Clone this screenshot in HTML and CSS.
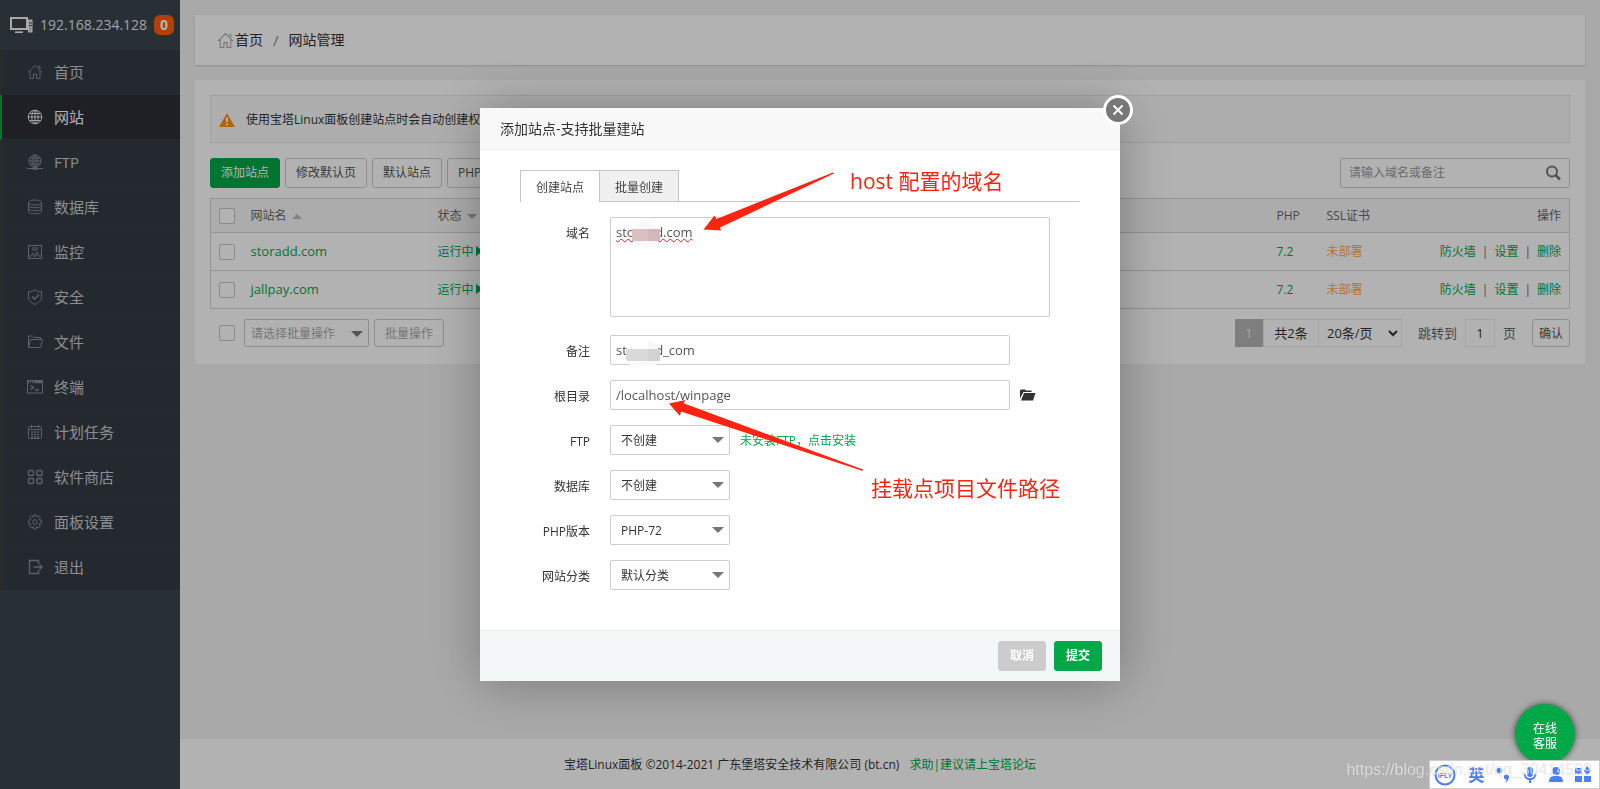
FILE: index.html
```html
<!DOCTYPE html>
<html lang="zh-CN">
<head>
<meta charset="utf-8">
<title>宝塔Linux面板</title>
<link rel="stylesheet" href="styles.css">
</head>
<body>
<div class="app">
  <aside class="sidebar">
    <div class="server">
      <svg width="24" height="18" viewBox="0 0 24 18" fill="none" stroke="#f2f2f2" stroke-width="2"><rect x="1" y="2" width="16" height="11"/><path d="M5 16.200h8" stroke-width="1.600"/><rect x="18.500" y="4" width="3.500" height="12" fill="#ccc" stroke-width="1"/><path d="M19 7h3M19 9.500h3" stroke="#555" stroke-width="1"/></svg>
      <span>192.168.234.128</span><span class="badge">0</span>
    </div>
    <nav class="menu">
      <a href="#"><svg class="ico" viewBox="0 0 16 16"><path d="M1 8.500 8 1.500l7 7M3 7v7.500h3.500V10h3v4.500H13V7M11 2.500h2v2.500"/></svg>首页</a>
      <a href="#" class="active"><svg class="ico" viewBox="0 0 16 16"><circle cx="8" cy="8" r="6.800"/><ellipse cx="8" cy="8" rx="3.200" ry="6.800"/><path d="M8 1v14M1 8h14M2 4.500h12M2 11.500h12"/></svg>网站</a>
      <a href="#"><svg class="ico" viewBox="0 0 16 16"><circle cx="8" cy="7" r="6"/><ellipse cx="8" cy="7" rx="2.800" ry="6"/><path d="M8 1v13M2 7h12M3 4h10M3 10h10M0 14.500h16"/><path d="M5.500 14.500h5" stroke-width="2.500"/></svg>FTP</a>
      <a href="#"><svg class="ico" viewBox="0 0 16 16"><ellipse cx="8" cy="3.500" rx="6.500" ry="2.500"/><path d="M1.500 3.500v9c0 3 13 3 13 0v-9M1.500 6.500c0 3 13 3 13 0M1.500 9.500c0 3 13 3 13 0"/></svg>数据库</a>
      <a href="#"><svg class="ico" viewBox="0 0 16 16"><rect x="1.500" y="1.500" width="13" height="13"/><path d="M5 4h6M5 6h6M2 12h2.500l1.500-3 2 4 2-5 1.500 4H14"/></svg>监控</a>
      <a href="#"><svg class="ico" viewBox="0 0 16 16"><path d="M8 .8c2 1.500 4 1.900 6.500 1.900v5c0 4-3 6.200-6.500 7.700-3.500-1.500-6.500-3.700-6.500-7.700v-5C4 2.700 6 2.300 8 .8z"/><path d="m5 7.500 2.500 2.500L12 5.500" stroke-width="1.500"/></svg>安全</a>
      <a href="#"><svg class="ico" viewBox="0 0 16 16"><path d="M1.500 13V2h4l1.500 1.500h6.500v2M1.500 13.500 3.500 5.500h12l-2 8z"/></svg>文件</a>
      <a href="#"><svg class="ico" viewBox="0 0 16 16"><rect x=".5" y="1.500" width="15" height="12.500"/><path d="M1 3h14" stroke-width="2.500" stroke-dasharray="1 1 1 1 1 1 9"/><path d="m3.500 6.500 3 2-3 2M8 11h4" stroke-width="1.500"/></svg>终端</a>
      <a href="#"><svg class="ico" viewBox="0 0 16 16"><rect x="1.500" y="2.500" width="13" height="12" rx="1"/><path d="M1.500 5.500h13M4.500 1v3M11.500 1v3"/><path d="M4 8h8.500M4 10.500h8.500M4 13h8.500" stroke-dasharray="2 1" stroke-width="1.500"/></svg>计划任务</a>
      <a href="#"><svg class="ico bold" viewBox="0 0 16 16"><rect x="1.500" y="1.500" width="5" height="5" rx="1"/><rect x="10" y="1.500" width="5" height="5" rx="1"/><rect x="1.500" y="9.500" width="5" height="5" rx="1"/><rect x="10" y="9.500" width="5" height="5" rx="1"/></svg>软件商店</a>
      <a href="#"><svg class="ico" viewBox="0 0 16 16"><circle cx="8" cy="8" r="2.300"/><path d="M6.800 1h2.400l.5 2 1.700-1.200 1.800 1.800L12.200 5.500l2.300.9v2.800l-2.300.8 1 2-1.800 1.800-1.900-1-.5 2.200H6.800l-.5-2.200-2 1-1.700-1.800 1-2L1.500 9.200V6.500l2.200-1-1-2 1.800-1.700L6.300 3z"/></svg>面板设置</a>
      <a href="#"><svg class="ico bold" viewBox="0 0 16 16"><path d="M11.500 5V1.500h-9v13h9V11M6.500 8H15M12.500 5.500 15 8l-2.500 2.500"/></svg>退出</a>
    </nav>
  </aside>

  <main class="main">
    <div class="crumbs card">
      <svg class="home" viewBox="0 0 16 16"><path d="M1 8.500 8 1.500l7 7M3 7v7.500h3.500V10h3v4.500H13V7M11 2.500h2v2.500"/></svg>
      <a href="#">首页</a><span class="sep">/</span><span>网站管理</span>
    </div>
    <section class="panel card">
      <div class="alert">
        <svg width="16" height="14" viewBox="0 0 16 14"><path d="M8 0 16 14H0z" fill="#ff9200"/><path d="M8 4.500v4.500M8 10.500v1.800" stroke="#fff" stroke-width="2"/></svg>
        <span>使用宝塔Linux面板创建站点时会自动创建权限</span>
      </div>
      <div class="toolbar">
        <button class="btn primary">添加站点</button>
        <button class="btn">修改默认页</button>
        <button class="btn">默认站点</button>
        <button class="btn">PHP命令行版本</button>
        <div class="search"><input type="text" placeholder="请输入域名或备注" aria-label="搜索"><svg width="16" height="16" viewBox="0 0 16 16" fill="none" stroke="#777"><circle cx="7" cy="6.500" r="5" stroke-width="2"/><path d="m10.500 10 4.500 4.500" stroke-width="2.500"/></svg></div>
      </div>
      <table class="sites">
        <thead><tr><th class="c-check"><input type="checkbox" aria-label="全选"></th><th class="c-name">网站名 <i class="tri up"></i></th><th class="c-state">状态 <i class="tri down"></i></th><th></th><th class="c-php">PHP</th><th class="c-ssl">SSL证书</th><th class="c-ops">操作</th></tr></thead>
        <tbody>
          <tr><td><input type="checkbox" aria-label="storadd.com"></td><td><a class="site" href="#">storadd.com</a></td><td><a href="#">运行中<i class="play"></i></a></td><td></td><td><a href="#">7.2</a></td><td><a class="warn" href="#">未部署</a></td><td class="c-ops"><a href="#">防火墙</a><b>|</b><a href="#">设置</a><b>|</b><a href="#">删除</a></td></tr>
          <tr><td><input type="checkbox" aria-label="jallpay.com"></td><td><a class="site" href="#">jallpay.com</a></td><td><a href="#">运行中<i class="play"></i></a></td><td></td><td><a href="#">7.2</a></td><td><a class="warn" href="#">未部署</a></td><td class="c-ops"><a href="#">防火墙</a><b>|</b><a href="#">设置</a><b>|</b><a href="#">删除</a></td></tr>
        </tbody>
      </table>
      <div class="bottom">
        <input type="checkbox" aria-label="批量选择">
        <div class="pick batch"><select aria-label="批量操作"><option>请选择批量操作</option></select></div>
        <button class="btn muted">批量操作</button>
        <div class="pager">
          <span class="page-now">1</span><span class="total">共2条</span>
          <select class="size" aria-label="每页条数"><option>20条/页</option></select>
          <label class="jump" for="jump">跳转到</label><input class="jump-no" id="jump" type="text" value="1"><span class="ye">页</span>
          <button class="btn ok">确认</button>
        </div>
      </div>
    </section>
    <footer class="foot">宝塔Linux面板 ©2014-2021 广东堡塔安全技术有限公司 (bt.cn)<a href="#">求助|建议请上宝塔论坛</a></footer>
  </main>
</div>

<div class="shade">
  <div class="dialog" role="dialog" aria-labelledby="dlg-title">
    <h1 class="dlg-title" id="dlg-title">添加站点-支持批量建站</h1>
    <button class="close" aria-label="关闭"><svg width="12" height="12" viewBox="0 0 12 12"><path d="m1.500 1.500 9 9M10.500 1.500l-9 9" stroke="#fff" stroke-width="2"/></svg></button>
    <div class="dlg-body">
      <div class="tabs"><button class="tab on">创建站点</button><button class="tab">批量创建</button></div>
      <form class="form">
        <div class="row"><label for="domain">域名</label><textarea id="domain" class="area" spellcheck="false">storadd.com</textarea></div>
        <div class="row"><label for="note">备注</label><input id="note" class="text" type="text" value="storadd_com"></div>
        <div class="row"><label for="root">根目录</label><input id="root" class="text" type="text" value="/localhost/winpage"><svg width="16" height="12" viewBox="0 0 16 12" fill="#333"><path d="M0 9.500V1.500L1 .5h4l1 1h5.500v1.500H3.500z"/><path d="M4 4h11.500L13 11.500H1z"/></svg></div>
        <div class="row"><label for="ftp">FTP</label><div class="pick"><select id="ftp"><option>不创建</option></select></div><a class="install" href="#">未安装FTP，点击安装</a></div>
        <div class="row"><label for="db">数据库</label><div class="pick"><select id="db"><option>不创建</option></select></div></div>
        <div class="row"><label for="php">PHP版本</label><div class="pick"><select id="php"><option>PHP-72</option></select></div></div>
        <div class="row"><label for="cat">网站分类</label><div class="pick"><select id="cat"><option>默认分类</option></select></div></div>
      </form>
    </div>
    <div class="dlg-foot"><button class="btn gray">取消</button><button class="btn primary">提交</button></div>
    <svg class="marks" width="640" height="573" viewBox="0 0 640 573">
      <ellipse cx="166" cy="127" rx="14" ry="13" fill="#f9f9f9"/>
      <path d="M152 121h16v12h-16z" fill="#dcbfc2"/><path d="M168 121h12v12h-12z" fill="#d2b8bb"/>
      <path d="M147 232h31v9h-31z" fill="#fff"/><path d="M168 241v-9q8 1 10 9z" fill="#f8f8f8"/>
      <path d="M146 241h34v14q-17 8-34 0z" fill="#fafafa"/>
      <path d="M146 244q0-3 3-3h31v12h-31q-3 0-3-3z" fill="#d9d9d9"/><path d="M168 241h12v12h-12z" fill="#d2d2d2"/>
      <path d="M223.500 121.500 234.500 107.500 236.500 111 353 64.500 354 65.500 240 119.500 241 122.500z" fill="#ff2312"/>
      <path d="M189 295.500 205.500 292 203.500 295.300 383 361.500 383 363 201 303.500 200 308z" fill="#ff2312"/>
    </svg>
    <p class="remark first">host 配置的域名</p>
    <p class="remark second">挂载点项目文件路径</p>
  </div>
</div>

<button class="service">在线<br>客服</button>
<div class="ime">
  <svg width="22" height="22" viewBox="0 0 22 22"><circle cx="11" cy="11" r="9.500" fill="none" stroke="#4d7cff" stroke-width="2"/><text x="11" y="14" text-anchor="middle" class="ime-logo">iFLY</text></svg>
  <span>英</span>
  <svg width="14" height="16" viewBox="0 0 14 16" fill="#4d7cff"><circle cx="3.500" cy="3.500" r="2.800"/><path d="M8 9a2.600 2.600 0 1 1 4.600 2.500C12 13.500 11 15 8.500 15.500c1.500-1 2-2 2-3A2.600 2.600 0 0 1 8 9z"/></svg>
  <svg width="14" height="18" viewBox="0 0 14 18" fill="#4d7cff"><rect x="4" y="1" width="6" height="10" rx="3"/><path d="M1.500 7.500c0 7.500 11 7.500 11 0M7 13v4" fill="none" stroke="#4d7cff" stroke-width="2"/></svg>
  <svg width="14" height="17" viewBox="0 0 14 17" fill="#4d7cff"><circle cx="7" cy="5" r="4"/><path d="M0 16q0-6 5-6h4q5 0 5 6z"/></svg>
  <svg width="16" height="17" viewBox="0 0 16 17" fill="#4d7cff"><path d="M0 2h7v6H0zM12 0l4 5-4 4-3-4zM0 10h7v6H0zM9 10h7v6H9z"/></svg>
</div>
<div class="watermark">https://blog.csdn.net/qq_30414599</div>
</body>
</html>
```
FILE: styles.css
```css
* { box-sizing: border-box; }
body {
  margin: 0;
  font: 12px/20px "Open Sans", "Noto Sans CJK SC", sans-serif;
  color: #333;
  background: #f2f2f2;
}
button, input, select, textarea { font: inherit; color: inherit; margin: 0; }
a { color: #00a848; text-decoration: none; }

.app { display: flex; min-height: 100vh; }
.sidebar { width: 180px; flex: none; background: #3a444d; }
.server { height: 50px; padding-left: 10px; display: flex; align-items: center; font-size: 14px; color: #e6e6e6; }
.server svg { margin-right: 6px; }
.badge { margin-left: 7px; width: 20px; height: 20px; border-radius: 6px; background: #ff5c00; color: #fff; font-weight: bold; text-align: center; }
.menu { border-bottom: 1px solid #3a444d; }
.menu a {
  display: flex; align-items: center; height: 45px; padding-left: 25px;
  border-left: 2px solid #3d3d3d; border-bottom: 1px solid #333d45;
  background: #333c44; color: #c9cbcc; font-size: 15px;
}
.menu .active { background: #2b2f35; border-left-color: #00a848; color: #fff; }
.ico { width: 16px; height: 16px; margin-right: 11px; fill: none; stroke: #858c92; stroke-width: 1; }
.bold { stroke-width: 1.4; }
.active .ico { stroke: #e8e8e8; }

.main { flex: 1; min-width: 0; display: flex; flex-direction: column; padding-top: 15px; }
.card { margin: 0 15px; background: #fff; box-shadow: 0 1px 2px #ccc; }
.crumbs { display: flex; align-items: center; height: 50px; padding-left: 22px; font-size: 14px; }
.crumbs a { color: #333; }
.home { width: 17px; height: 17px; margin-right: 1px; fill: none; stroke: #aaa; }
.sep { margin: 0 10px; color: #888; font-size: 15px; }
.panel { margin-top: 15px; padding: 15px 15px 17px; box-shadow: none; }
.alert { display: flex; align-items: center; gap: 11px; height: 48px; padding: 1px 0 0 8px; border: 1px solid #e6e6e6; background: #fafafa; }
.toolbar { display: flex; gap: 5px; margin: 15px 0 10px; }
.btn { height: 30px; padding: 0 10px; border: 1px solid #ccc; border-radius: 3px; background: #fff; color: #555; font-size: 12px; line-height: 20px; }
.btn.primary { background: #00a848; border-color: #00a848; color: #fff; }
.search { margin-left: auto; width: 230px; height: 30px; display: flex; align-items: center; padding: 0 8px; border: 1px solid #ccc; border-radius: 2px; }
.search input { flex: 1; min-width: 0; border: 0; padding: 0; background: none; outline: 0; }
.search input::placeholder { color: #999; }

.sites { width: 100%; border-collapse: collapse; table-layout: fixed; border: 1px solid #d4d4d4; }
.sites th { height: 34px; background: #f6f6f6; font-weight: normal; color: #666; }
.sites td { height: 38px; border-top: 1px solid #d4d4d4; }
.sites th, .sites td { padding: 0 8px; text-align: left; white-space: nowrap; }
.sites b { margin: 0 6px; font-weight: normal; color: #666; }
.sites .c-check { width: 32px; }
.sites .c-name { width: 187px; }
.sites .c-state { width: 120px; }
.sites .c-php { width: 50px; }
.sites .c-ssl { width: 100px; }
.sites .c-ops { width: 151px; text-align: right; padding-left: 0; }
.site { font-size: 13px; }
.sites .warn { color: #ffa64d; }
input[type="checkbox"] { appearance: none; display: block; width: 16px; height: 16px; border: 1px solid #c8c8c8; border-radius: 2px; background: #fff; }
.tri { display: inline-block; margin-left: 2px; border: 5px solid transparent; vertical-align: middle; }
.up { border-top: 0; border-bottom-color: #bbb; }
.down { border-bottom: 0; border-top-color: #aaa; }
.play { display: inline-block; border: 5px solid transparent; border-left: 7px solid #00a848; border-right: 0; margin-left: 2px; }

.bottom { display: flex; align-items: center; gap: 5px; height: 28px; margin-top: 10px; padding-left: 9px; }
.pick { position: relative; width: 120px; height: 30px; }
.pick::after { content: ""; position: absolute; right: 6px; top: 12px; border: 6px solid transparent; border-top-color: #777; border-bottom: 0; pointer-events: none; }
.pick select { appearance: none; width: 100%; height: 100%; padding: 2px 10px 0; border: 1px solid #ccc; border-radius: 2px; background: #fff; }
.batch { width: 125px; height: 28px; margin-left: 4px; }
.batch select { color: #aaa; padding: 2px 6px 0; }
.bottom .btn { height: 28px; padding-top: 2px; color: #aaa; }
.pager { margin-left: auto; display: flex; align-items: center; height: 28px; font-size: 13px; }
.page-now, .total, .size, .jump-no { height: 28px; line-height: 26px; border: 1px solid #ececec; text-align: center; background: #fff; }
.page-now { width: 28px; background: #b5b5b5; border-color: #b5b5b5; color: #eee; }
.total { width: 55px; border-right: 0; }
.size { width: 84px; text-align: left; padding: 0 4px; }
.jump { margin: 0 8px 0 16px; color: #666; }
.jump-no { width: 30px; padding: 0; }
.ye { margin: 0 16px 0 8px; color: #666; }
.bottom .ok { width: 38px; padding: 2px 0 0; color: #555; }
.foot { margin-top: auto; height: 50px; padding-right: 180px; line-height: 51px; background: #fff; text-align: center; }
.foot a { margin-left: 10px; }

.shade { position: fixed; inset: 0; display: flex; align-items: center; justify-content: center; background: rgba(0, 0, 0, .3); }
.dialog { position: relative; width: 640px; background: #fff; box-shadow: 1px 1px 50px rgba(0, 0, 0, .3); }
.dlg-title { margin: 0; height: 42px; padding-left: 20px; border-bottom: 1px solid #eee; background: #f8f8f8; font-size: 14px; font-weight: normal; line-height: 42px; }
.close { position: absolute; right: -13px; top: -13px; width: 30px; height: 30px; padding: 0; border: 3px solid #fff; border-radius: 50%; background: #777; display: grid; place-items: center; }
.dlg-body { padding: 20px 40px 40px; }
.tabs { display: flex; border-bottom: 1px solid #c5c5d5; }
.tab { height: 31px; width: 80px; padding: 3px 0 0; border: 1px solid #c5c5d5; border-bottom: 0; background: #f0f0f0; color: #444; }
.tab.on { background: #fff; height: 32px; margin-bottom: -1px; border-right: 0; width: 79px; }
.form { display: grid; gap: 15px; padding: 15px 0 0; }
.row { display: flex; align-items: center; gap: 10px; }
.row label { width: 70px; height: 30px; margin-right: 10px; text-align: right; line-height: 33px; }
.install { padding-top: 2px; }
.area { width: 440px; height: 100px; padding: 4px 5px; margin-bottom: 3px; border: 1px solid #ccc; border-radius: 2px; resize: none; outline: 0; line-height: 20px; font-size: 13px; color: #555; text-decoration: underline wavy #e02020 1px; }
.row:first-child { align-items: flex-start; }
.text { width: 400px; height: 30px; padding: 0 5px; border: 1px solid #ccc; border-radius: 2px; color: #555; font-size: 13px; }
.dlg-foot { display: flex; justify-content: flex-end; gap: 8px; padding: 10px 18px; height: 51px; border-top: 1px solid #e4ecec; background: #f3f7f8; }
.dlg-foot .btn { width: 48px; font-weight: bold; }
.btn.gray { background: #ccc; border-color: #ccc; color: #fff; }
.marks { position: absolute; left: 0; top: 0; pointer-events: none; }
.remark { position: absolute; margin: 0; font-size: 21px; line-height: 30px; color: #ff2312; white-space: nowrap; }
.first { left: 370px; top: 58px; }
.second { left: 391px; top: 365px; }

.service { position: fixed; right: 25px; bottom: 25px; width: 60px; height: 60px; padding: 4px 0 0; border: 0; border-radius: 50%; background: #00a848; color: #fff; font-size: 12px; line-height: 15px; box-shadow: 0 0 6px rgba(0, 0, 0, .6); }
.ime { position: fixed; right: 0; bottom: 0; width: 171px; height: 29px; padding: 0 8px 0 4px; display: flex; align-items: center; justify-content: space-between; border: 1px solid #ccc; background: #fff; color: #4d7cff; font-size: 16px; font-weight: bold; }
.ime-logo { font: bold 7px "Liberation Sans", sans-serif; fill: #4d7cff; }
.watermark { position: fixed; right: 8px; bottom: 9px; font: 16px/20px "Liberation Sans", Arial, sans-serif; color: rgba(255, 255, 255, .7); text-shadow: 0 0 1px rgba(0, 0, 0, .25); pointer-events: none; }
```
